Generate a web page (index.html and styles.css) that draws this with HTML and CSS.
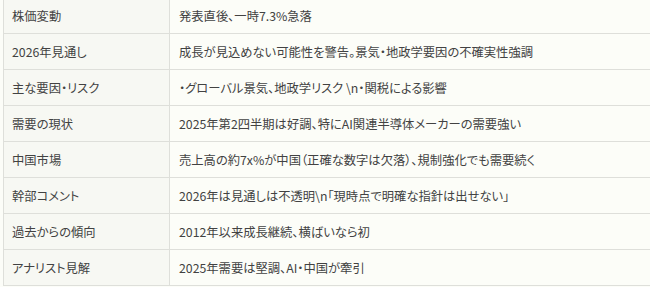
FILE: index.html
```html
<!DOCTYPE html>
<html lang="ja">
<head>
<meta charset="utf-8">
<link rel="stylesheet" href="styles.css">
</head>
<body>
<table class="info">
  <tr><th>株価変動</th><td>発表直後、一時7.3%急落</td></tr>
  <tr><th>2026年見通し</th><td>成長が見込めない可能性を警告。景気・地政学要因の不確実性強調</td></tr>
  <tr><th>主な要因・リスク</th><td>・グローバル景気、地政学リスク \n・関税による影響</td></tr>
  <tr><th>需要の現状</th><td>2025年第2四半期は好調、特にAI関連半導体メーカーの需要強い</td></tr>
  <tr><th>中国市場</th><td>売上高の約7x%が中国（正確な数字は欠落）、規制強化でも需要続く</td></tr>
  <tr><th>幹部コメント</th><td>2026年は見通しは不透明\n「現時点で明確な指針は出せない」</td></tr>
  <tr><th>過去からの傾向</th><td>2012年以来成長継続、横ばいなら初</td></tr>
  <tr><th>アナリスト見解</th><td>2025年需要は堅調、AI・中国が牽引</td></tr>
</table>
</body>
</html>
```

FILE: styles.css
```css
html, body {
  margin: 0;
  padding: 0;
  background: #fcfdf8;
}
body {
  font-family: "Noto Sans CJK JP", "Noto Sans", sans-serif;
  font-size: 12.3px;
  font-feature-settings: "palt";
  color: #424242;
  overflow: hidden;
}
.info {
  border-collapse: collapse;
  margin: -3px 0 0 3px;
  width: 648px;
}
.info th, .info td {
  border: 1px solid #dedfda;
  height: 36px;
  padding: 0 8px;
  box-sizing: border-box;
  text-align: left;
  font-weight: normal;
  vertical-align: middle;
  white-space: nowrap;
}
.info th {
  width: 166px;
  background: #f7f8f3;
}
.info td {
  padding-left: 9px;
  background: #fcfdf8;
}
```
